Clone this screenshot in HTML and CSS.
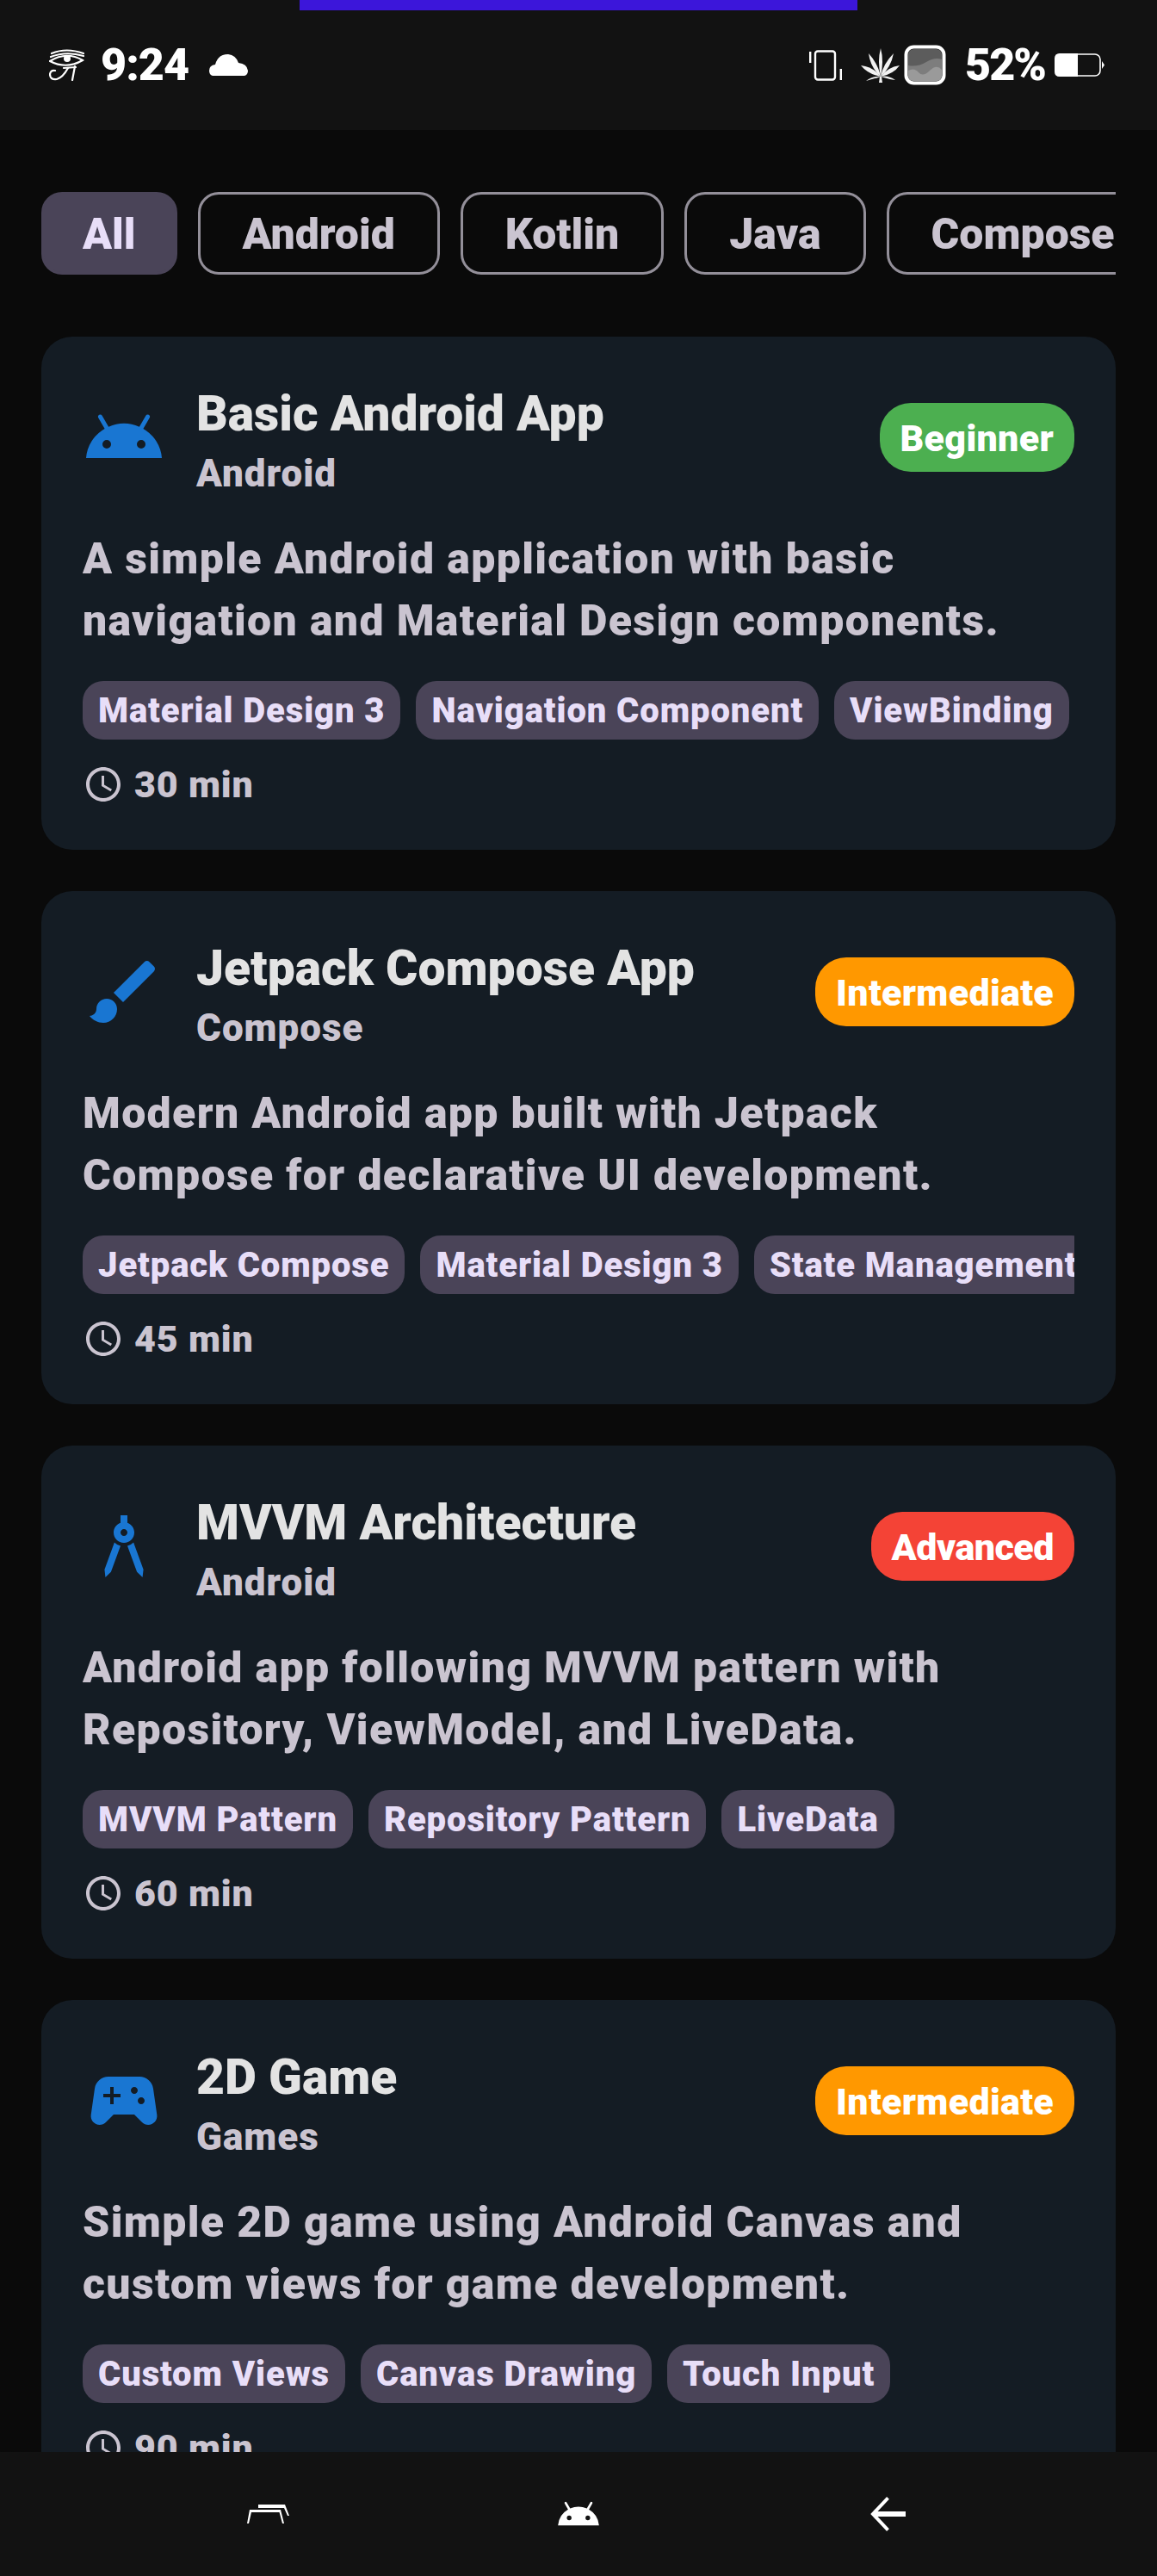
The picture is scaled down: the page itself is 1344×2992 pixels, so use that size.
FILE: index.html
```html
<!DOCTYPE html>
<html lang="en">
<head>
<meta charset="utf-8">
<title>Projects</title>
<link rel="stylesheet" href="styles.css">
</head>
<body>
<div class="phone">
  <header class="status">
    <div class="camera-bar"></div>
    <div class="status-left">
      <svg class="ic-eye" viewBox="0 0 41 37"><g fill="none" stroke="#fff" stroke-linecap="round" stroke-width="2.200"><path d="M3 5Q20-2 40 5"/><path d="M2 9Q20 2 40 8"/><path d="M1 14Q20 2 39 13Q20 24 1 14Z"/><path d="M22 22Q16 33 9 35Q1 36 1 29Q2 24 7 25"/><path d="M30 20L27 36"/><path d="M17 22L31 21"/></g><circle cx="21" cy="11" r="4" fill="#fff"/></svg>
      <span class="clock-text">9:24</span>
      <svg class="ic-cloud" viewBox="0 0 45 25"><path fill="#fff" d="M4 25Q0 24 0 19Q0 13 7 12Q10 0 22 0Q31 1 34 10Q44 11 45 19Q45 24 41 25Z"/></svg>
    </div>
    <div class="status-right">
      <svg class="ic-vibrate" viewBox="0 0 38 36"><g fill="none" stroke="#fff"><rect x="7" y="1.5" width="23" height="33" rx="3" stroke-width="2.4"/><path stroke-width="2.4" d="M1.2 2V15M36.8 22V35"/></g></svg>
      <svg class="ic-leaf" viewBox="0 0 46 40"><g fill="#f2f2f2"><path d="M23 33Q19 15 23 0Q27 15 23 33Z"/><path d="M23 33Q11 22 9 6Q20 18 23 33Z"/><path d="M23 33Q35 22 38 6Q26 18 23 33Z"/><path d="M23 33Q8 30 0 20Q15 22 23 33Z"/><path d="M23 33Q38 30 45 20Q31 22 23 33Z"/><path d="M23 33Q14 36 6 38Q14 32 23 33Z"/><path d="M23 33Q32 36 40 37Q32 31 23 33Z"/><path d="M22 33H24L25 40H21Z"/></g></svg>
      <svg class="ic-widget" viewBox="0 0 49 47"><defs><clipPath id="clip-widget"><rect x="5" y="5" width="39" height="37" rx="6"/></clipPath></defs><g clip-path="url(#clip-widget)"><rect width="49" height="47" fill="#5c5c5c"/><path fill="#7d7d7d" d="M5 24Q16 26 26 20T44 17V42H5Z"/><path fill="#9a9a9a" d="M5 30Q12 26 17 32T30 30T44 29V42H5Z"/></g><rect x="2.500" y="2.500" width="44" height="42" rx="9" fill="none" stroke="#fff" stroke-width="4"/></svg>
      <span class="battery-text">52%</span>
      <svg class="ic-battery" viewBox="0 0 58 27"><rect x="1" y="1" width="52" height="25" rx="6" fill="none" stroke="#fff" stroke-width="1.600"/><path fill="#fff" d="M6 0H27V27H6Q0 27 0 21V6Q0 0 6 0ZM55 9L58 13.500L55 18Z"/></svg>
    </div>
  </header>

  <main class="content">
    <nav class="chips">
      <span class="chip chip-on">All</span>
      <span class="chip">Android</span>
      <span class="chip">Kotlin</span>
      <span class="chip">Java</span>
      <span class="chip">Compose</span>
    </nav>

    <article class="card">
      <div class="card-head">
        <svg class="cat-icon" viewBox="0 2 24 24"><path d="M17.6,11.48 19.44,8.3a0.63,0.63 0,0 0,-1.09 -0.63l-1.88,3.24a11.43,11.43 0,0 0,-8.94 0L5.65,7.67a0.63,0.63 0,0 0,-1.09 0.63L6.4,11.48A10.81,10.81 0,0 0,1,20L23,20A10.81,10.81 0,0 0,17.6 11.48ZM7,17.25A1.25,1.25 0,1 1,8.25 16,1.25 1.25,0 0,1 7,17.25ZM17,17.25A1.25,1.25 0,1 1,18.25 16,1.25 1.25,0 0,1 17,17.25Z"/></svg>
        <div class="titles">
          <h2 class="title">Basic Android App</h2>
          <p class="subtitle">Android</p>
        </div>
        <span class="badge badge-green">Beginner</span>
      </div>
      <p class="desc">A simple Android application with basic navigation and Material Design components.</p>
      <div class="tags"><span class="tag">Material Design 3</span><span class="tag">Navigation Component</span><span class="tag">ViewBinding</span></div>
      <div class="time"><svg class="clock" viewBox="0 0 24 24"><path d="M11.99 2C6.47 2 2 6.48 2 12s4.47 10 9.99 10C17.52 22 22 17.52 22 12S17.52 2 11.99 2zM12 20c-4.42 0-8-3.58-8-8s3.58-8 8-8 8 3.58 8 8-3.58 8-8 8zM12.5 7H11v6l5.25 3.15.75-1.23-4.5-2.67z"/></svg><span>30 min</span></div>
    </article>

    <article class="card">
      <div class="card-head">
        <svg class="cat-icon" viewBox="0 0 24 24"><path d="M7 14c-1.66 0-3 1.34-3 3 0 1.31-1.16 2-2 2 .92 1.22 2.49 2 4 2 2.21 0 4-1.79 4-4 0-1.66-1.34-3-3-3zm13.71-9.37l-1.34-1.34c-.39-.39-1.02-.39-1.41 0L9 12.25 11.75 15l8.96-8.96c.39-.39.39-1.02 0-1.41z"/></svg>
        <div class="titles">
          <h2 class="title">Jetpack Compose App</h2>
          <p class="subtitle">Compose</p>
        </div>
        <span class="badge badge-orange">Intermediate</span>
      </div>
      <p class="desc">Modern Android app built with Jetpack Compose for declarative UI development.</p>
      <div class="tags"><span class="tag">Jetpack Compose</span><span class="tag">Material Design 3</span><span class="tag">State Management</span></div>
      <div class="time"><svg class="clock" viewBox="0 0 24 24"><path d="M11.99 2C6.47 2 2 6.48 2 12s4.47 10 9.99 10C17.52 22 22 17.52 22 12S17.52 2 11.99 2zM12 20c-4.42 0-8-3.58-8-8s3.58-8 8-8 8 3.58 8 8-3.58 8-8 8zM12.5 7H11v6l5.25 3.15.75-1.23-4.5-2.67z"/></svg><span>45 min</span></div>
    </article>

    <article class="card">
      <div class="card-head">
        <svg class="cat-icon" viewBox="0 0 24 24"><path d="M6.36,18.78L6.61,21l1.62-1.54l2.77-7.6c-0.68-0.17-1.28-0.51-1.77-0.98L6.36,18.78z M14.77,10.88c-0.49,0.47-1.1,0.81-1.77,0.98l2.77,7.6L17.39,21l0.26-2.22L14.77,10.88z M15,8c0-1.3-0.84-2.4-2-2.82V3h-2v2.18C9.84,5.6,9,6.7,9,8c0,1.66,1.34,3,3,3S15,9.66,15,8z M12,9c-0.55,0-1-0.45-1-1c0-0.55,0.45-1,1-1s1,0.45,1,1C13,8.55,12.55,9,12,9z"/></svg>
        <div class="titles">
          <h2 class="title">MVVM Architecture</h2>
          <p class="subtitle">Android</p>
        </div>
        <span class="badge badge-red">Advanced</span>
      </div>
      <p class="desc">Android app following MVVM pattern with Repository, ViewModel, and LiveData.</p>
      <div class="tags"><span class="tag">MVVM Pattern</span><span class="tag">Repository Pattern</span><span class="tag">LiveData</span></div>
      <div class="time"><svg class="clock" viewBox="0 0 24 24"><path d="M11.99 2C6.47 2 2 6.48 2 12s4.47 10 9.99 10C17.52 22 22 17.52 22 12S17.52 2 11.99 2zM12 20c-4.42 0-8-3.58-8-8s3.58-8 8-8 8 3.58 8 8-3.58 8-8 8zM12.5 7H11v6l5.25 3.15.75-1.23-4.5-2.67z"/></svg><span>60 min</span></div>
    </article>

    <article class="card">
      <div class="card-head">
        <svg class="cat-icon" viewBox="0 0 24 24"><path fill-rule="evenodd" d="M21.58 16.09l-1.09-7.66C20.21 6.46 18.52 5 16.53 5H7.47C5.48 5 3.79 6.46 3.51 8.43l-1.09 7.66C2.2 17.63 3.39 19 4.94 19c.68 0 1.32-.27 1.8-.75L9 16h6l2.25 2.25c.48.48 1.13.75 1.8.75 1.56 0 2.75-1.37 2.53-2.91zM11 11H9v2H8v-2H6v-1h2V8h1v2h2v1zm4-1c-.55 0-1-.45-1-1s.45-1 1-1 1 .45 1 1-.45 1-1 1zm2 3c-.55 0-1-.45-1-1s.45-1 1-1 1 .45 1 1-.45 1-1 1z"/></svg>
        <div class="titles">
          <h2 class="title">2D Game</h2>
          <p class="subtitle">Games</p>
        </div>
        <span class="badge badge-orange">Intermediate</span>
      </div>
      <p class="desc">Simple 2D game using Android Canvas and custom views for game development.</p>
      <div class="tags"><span class="tag">Custom Views</span><span class="tag">Canvas Drawing</span><span class="tag">Touch Input</span></div>
      <div class="time"><svg class="clock" viewBox="0 0 24 24"><path d="M11.99 2C6.47 2 2 6.48 2 12s4.47 10 9.99 10C17.52 22 22 17.52 22 12S17.52 2 11.99 2zM12 20c-4.42 0-8-3.58-8-8s3.58-8 8-8 8 3.58 8 8-3.58 8-8 8zM12.5 7H11v6l5.25 3.15.75-1.23-4.5-2.67z"/></svg><span>90 min</span></div>
    </article>
  </main>

  <footer class="navbar">
    <svg class="nav-recents" viewBox="0 0 49 22"><g fill="#fff"><path d="M0 22L3 6H39L43 22H41L37.500 9H5L2 22Z"/><path d="M13 0H44L49 13H47L43 4H13Z"/></g></svg>
    <svg class="nav-home" viewBox="0 7 24 13.800" preserveAspectRatio="none"><path fill="#fff" fill-rule="evenodd" d="M17.6,11.48 19.44,8.3a0.63,0.63 0,0 0,-1.09 -0.63l-1.88,3.24a11.43,11.43 0,0 0,-8.94 0L5.65,7.67a0.63,0.63 0,0 0,-1.09 0.63L6.4,11.48A10.81,10.81 0,0 0,1,20L23,20A10.81,10.81 0,0 0,17.6 11.48ZM7,17.25A1.25,1.25 0,1 1,8.25 16,1.25 1.25,0 0,1 7,17.25ZM17,17.25A1.25,1.25 0,1 1,18.25 16,1.25 1.25,0 0,1 17,17.25Z"/></svg>
    <svg class="nav-back" viewBox="0 0 42 40"><path fill="none" stroke="#fff" stroke-width="4" d="M21 1L3 20L21 39"/><path fill="none" stroke="#fff" stroke-width="6" d="M4 20H42"/></svg>
  </footer>
</div>
</body>
</html>
```

FILE: styles.css
```css
* { box-sizing: border-box; }
html, body { margin: 0; padding: 0; background: #0a0a0a; }
body { font-family: "Roboto", "Noto Sans", sans-serif; font-weight: 900; }
.phone { width: 1344px; height: 2992px; display: flex; flex-direction: column; overflow: hidden; position: relative; }

.status { height: 151px; flex: none; background: #121212; display: flex; justify-content: space-between; align-items: center; padding: 0 61px 0 57px; color: #fff; position: relative; }
.camera-bar { position: absolute; top: 0; left: 348px; width: 648px; height: 12px; background: #3c16da; }
.status-left, .status-right { display: flex; align-items: center; }
.ic-eye { width: 41px; height: 37px; margin-right: 19px; }
.clock-text { font-size: 52px; line-height: 60px; width: 100px; letter-spacing: -1px; }
.ic-cloud { width: 45px; height: 25px; margin-left: 26px; }
.ic-vibrate { width: 38px; height: 36px; margin-right: 22px; }
.ic-leaf { width: 46px; height: 40px; margin-right: 4px; }
.ic-widget { width: 49px; height: 47px; margin-right: 22px; }
.battery-text { font-size: 52px; line-height: 60px; width: 90px; margin-right: 14px; letter-spacing: -2px; }
.ic-battery { width: 58px; height: 27px; }

.content { flex: 1; min-height: 0; overflow: hidden; padding: 72px 48px 0; display: flex; flex-direction: column; gap: 48px; }
.chips { display: flex; gap: 24px; overflow: hidden; flex: none; margin-bottom: 24px; }
.chip { flex: none; height: 96px; line-height: 92px; padding: 0 49px; border: 3px solid #938f99; border-radius: 24px; color: #cac4d0; font-size: 50px; }
.chip-on { background: #4a4458; border-color: #4a4458; color: #e8def8; padding: 0 45px; }

.card { flex: none; height: 596px; background: #141c24; border-radius: 36px; padding: 48px; display: flex; flex-direction: column; }
.card-head { display: flex; align-items: center; height: 138px; margin-bottom: 36px; }
.cat-icon { width: 96px; height: 96px; flex: none; fill: #1976d2; margin-right: 36px; }
.titles { flex: 1; min-width: 0; }
.title { margin: 0; color: #e3e3e3; font-size: 57px; line-height: 84px; font-weight: 900; }
.subtitle { margin: 0; color: #cac4d0; font-size: 44px; line-height: 54px; letter-spacing: 1px; }
.badge { flex: none; height: 80px; line-height: 82px; padding: 0 24px; border-radius: 36px; color: #fff; font-size: 43px; letter-spacing: .3px; }
.badge-green { background: #4caf50; }
.badge-orange { background: #ff9800; }
.badge-red { background: #f44336; letter-spacing: -.5px; }
.desc { margin: 0 0 34px; color: #cac4d0; font-size: 50px; line-height: 72px; height: 144px; letter-spacing: 1.35px; }
.tags { display: flex; gap: 18px; overflow: hidden; flex: none; }
.tag { flex: none; height: 68px; line-height: 70px; padding: 0 18px; border-radius: 24px; background: #4a4458; color: #e8def8; font-size: 40px; letter-spacing: .9px; }
.time { display: flex; align-items: center; gap: 12px; height: 56px; margin-top: 24px; color: #cac4d0; font-size: 43px; letter-spacing: .8px; }
.clock { width: 48px; height: 48px; fill: #cac4d0; flex: none; }

.navbar { height: 144px; flex: none; background: #121212; position: relative; display: flex; align-items: center; padding-left: 287px; }
.nav-recents { width: 49px; height: 22px; margin-right: 310px; }
.nav-home { width: 52px; height: 30px; margin-right: 313px; }
.nav-back { width: 41px; height: 40px; }
```
